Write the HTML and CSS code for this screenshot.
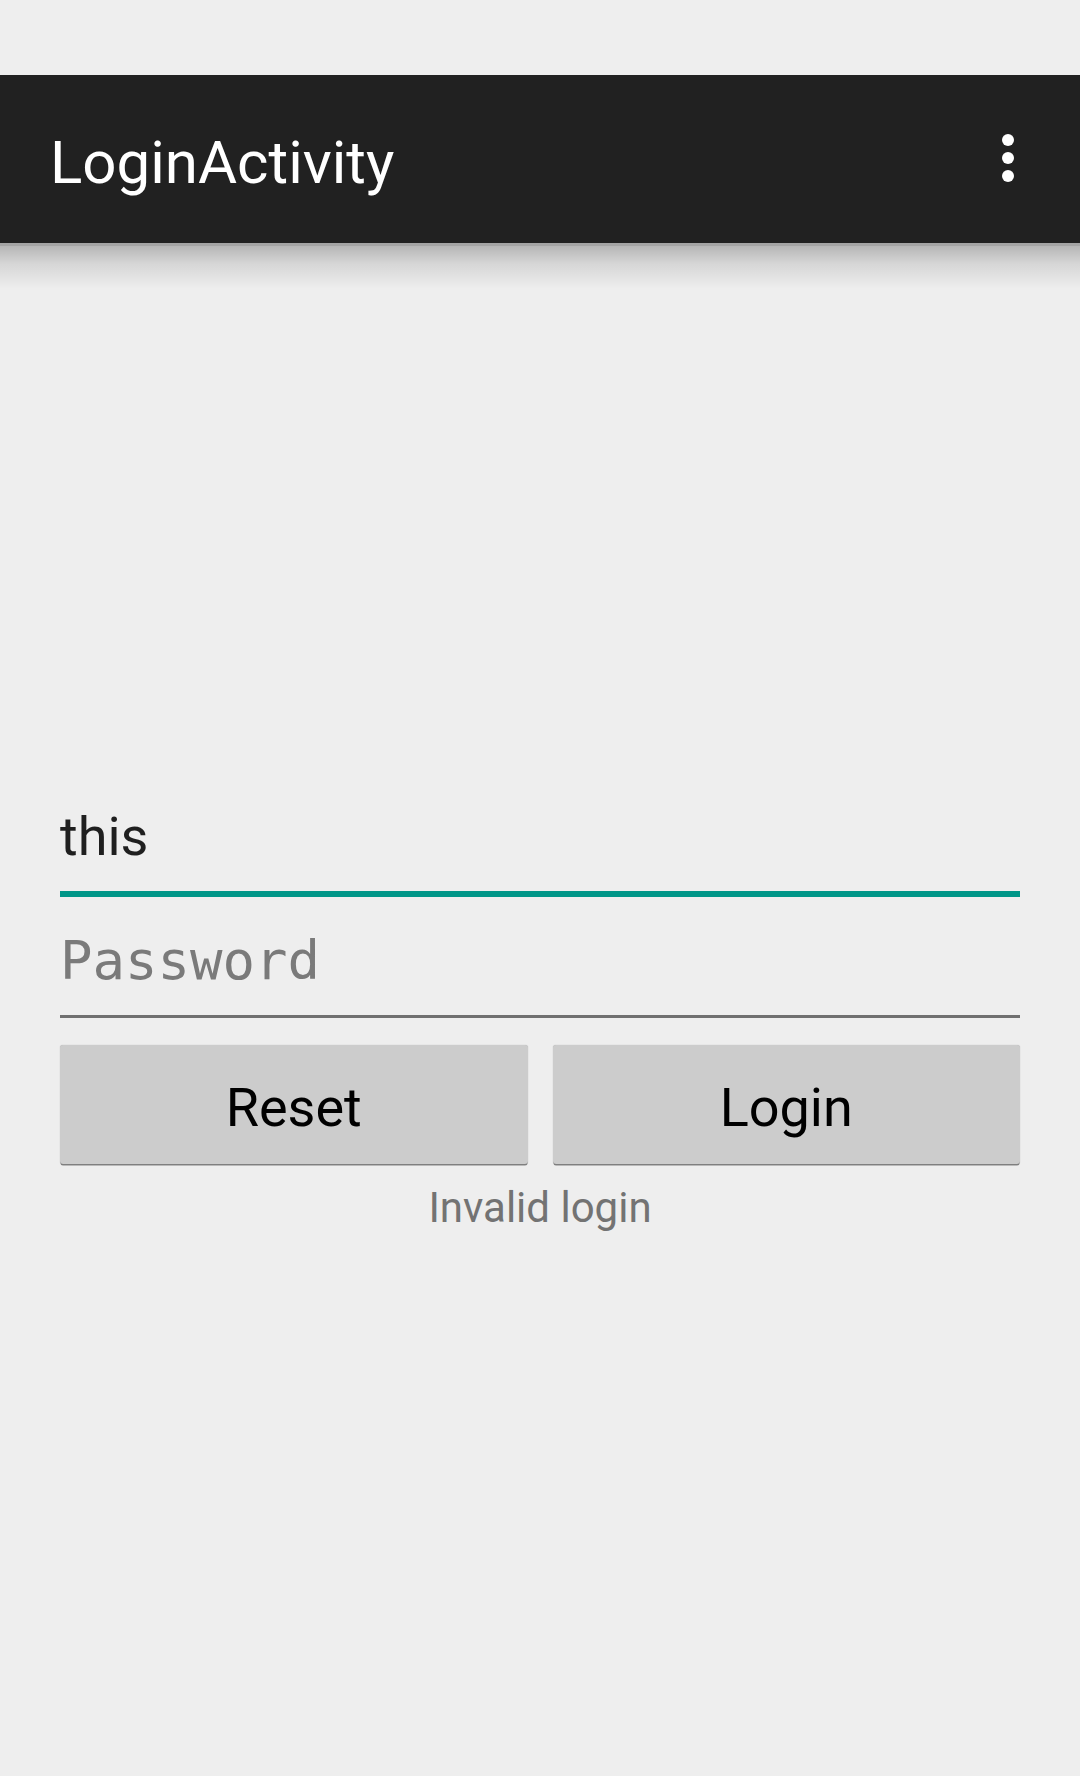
FILE: index.html
```html
<!DOCTYPE html>
<html lang="en">
<head>
<meta charset="utf-8">
<title>LoginActivity</title>
<link rel="stylesheet" href="styles.css">
</head>
<body>
<div class="status"></div>
<header class="toolbar">
  <h1 class="title">LoginActivity</h1>
  <svg class="overflow" width="12" height="48" viewBox="0 0 12 48" aria-hidden="true">
    <circle cx="6" cy="6" r="6" fill="#fff"/>
    <circle cx="6" cy="24" r="6" fill="#fff"/>
    <circle cx="6" cy="42" r="6" fill="#fff"/>
  </svg>
</header>
<main class="content">
  <div class="field field-active"><span class="value">this</span></div>
  <div class="field field-idle"><span class="hint">Password</span></div>
  <div class="buttons">
    <button class="btn">Reset</button>
    <button class="btn">Login</button>
  </div>
  <p class="error">Invalid login</p>
</main>
</body>
</html>
```

FILE: styles.css
```css
html, body {
  margin: 0;
  padding: 0;
}
body {
  width: 1080px;
  height: 1776px;
  background: #eeeeee;
  font-family: Roboto, "Noto Sans", sans-serif;
  overflow: hidden;
}
.status {
  height: 75px;
  background: #eeeeee;
}
.toolbar {
  position: relative;
  z-index: 1;
  height: 168px;
  background: #212121;
  display: flex;
  align-items: center;
  justify-content: space-between;
  padding: 0 66px 0 50px;
  box-sizing: border-box;
}
.toolbar::after {
  content: "";
  position: absolute;
  left: 0;
  right: 0;
  top: 100%;
  height: 46px;
  background:
    linear-gradient(#a4a4a4, #a4a4a4) top / 100% 3px no-repeat,
    linear-gradient(rgba(0,0,0,0.26), rgba(0,0,0,0.10) 45%, rgba(0,0,0,0));
}
.title {
  margin: 0;
  padding-top: 6px;
  font-weight: 400;
  font-size: 60px;
  color: #ffffff;
}
.overflow {
  display: block;
  margin-top: -2px;
}
.content {
  padding: 562px 60px 0 60px;
}
.field {
  box-sizing: border-box;
  line-height: 64px;
  font-size: 54px;
}
.field-active {
  padding-bottom: 22px;
  border-bottom: 6px solid #009688;
  color: #1f1f1f;
}
.field-idle {
  margin-top: 32px;
  padding-bottom: 22px;
  border-bottom: 3px solid #707070;
}
.hint {
  font-family: "DejaVu Sans Mono", "Liberation Mono", monospace;
  color: #7a7a7a;
  font-size: 54px;
}
.buttons {
  margin-top: 27px;
  display: flex;
  gap: 25px;
}
.btn {
  flex: 1;
  height: 119px;
  padding: 6px 0 0;
  border: none;
  border-radius: 3px;
  background: #cccccc;
  color: #000000;
  font-family: Roboto, "Noto Sans", sans-serif;
  font-size: 54px;
  box-shadow: 0 2px 0 -0.5px rgba(0,0,0,0.45), 0 0 1px rgba(0,0,0,0.3);
}
.error {
  margin: 19px 0 0;
  text-align: center;
  font-size: 42px;
  line-height: 50px;
  color: #737373;
}
```
